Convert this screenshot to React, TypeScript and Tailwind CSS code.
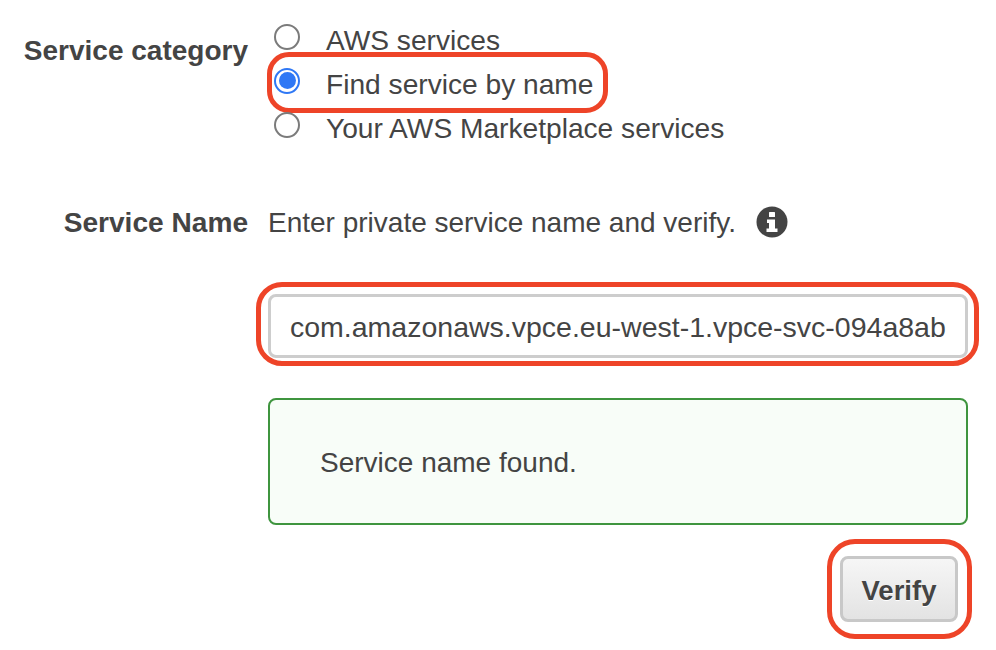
import React from 'react';

const FONT = "font-['Liberation_Sans',Arial,sans-serif]";

const Radio = ({ checked }: { checked?: boolean }) =>
  checked ? (
    <span className="mb-[7px] flex h-[26px] w-[26px] shrink-0 items-center justify-center rounded-full border-2 border-[#2f78f5] bg-white">
      <span className="h-[17px] w-[17px] rounded-full bg-[#2f78f5]" />
    </span>
  ) : (
    <span className="mb-[7px] h-[26px] w-[26px] shrink-0 rounded-full border-2 border-[#7b7b7b] bg-white" />
  );

const Highlight = ({ className }: { className: string }) => (
  <span className={`pointer-events-none absolute border-[5px] border-[#ee4428] ${className}`} />
);

const InfoIcon = () => (
  <svg width="32" height="32" viewBox="0 0 32 32" className="shrink-0">
    <circle cx="16" cy="16" r="15.5" fill="#444" />
    <rect x="13" y="6" width="6" height="5" rx="0.5" fill="#fff" />
    <path d="M11 13.5h8V22.5h2.5V26h-11V22.5H13V17h-2z" fill="#fff" />
  </svg>
);

const RadioRow = ({ label, checked, ring }: { label: string; checked?: boolean; ring?: boolean }) => (
  <div className="relative flex h-11 items-center gap-[26px] pl-1.5">
    <Radio checked={checked} />
    <span className="whitespace-nowrap pt-0.5 text-[28.15px] leading-none">{label}</span>
    {ring && <Highlight className="left-[-1px] top-[-10px] h-[61px] w-[341px] rounded-[22px]" />}
  </div>
);

const App = () => {
  return (
    <div className={`h-[650px] w-[996px] overflow-hidden bg-white text-[28px] text-[#444] ${FONT}`}>
      <div className="grid grid-cols-[248px_700px] gap-x-5 pt-[18px]">
        <div className="pt-3.5 text-right font-bold leading-[38px]">Service category</div>
        <div>
          <RadioRow label="AWS services" />
          <RadioRow label="Find service by name" checked ring />
          <RadioRow label="Your AWS Marketplace services" />
        </div>

        <div className="mt-[50px] flex h-[44px] items-center justify-end pt-0.5 text-[28.1px] font-bold">Service Name</div>
        <div className="mt-[50px] flex h-[44px] items-center gap-5">
          <span className="whitespace-nowrap pt-0.5">Enter private service name and verify.</span>
          <InfoIcon />
        </div>

        <div className="col-start-2 mt-[50px] flex flex-col">
          <div className="relative flex h-16 items-center rounded-lg border-[3px] border-[#cdcdcd] bg-white pl-[19px] pt-0.5 text-[28.5px]">
            <span className="whitespace-nowrap">com.amazonaws.vpce.eu-west-1.vpce-svc-094a8ab</span>
            <Highlight className="left-[-15px] top-[-15px] h-[84px] w-[723px] rounded-[26px]" />
          </div>

          <div className="mt-10 flex h-[127px] items-center rounded-lg border-2 border-[#3f953f] bg-[#f8fdf8] pl-[50px] pt-0.5">
            Service name found.
          </div>

          <div className="mt-[31px] flex justify-end pr-2.5">
            <button className="relative h-[66px] w-[118px] rounded-lg border-[3px] border-[#c8c8c8] bg-gradient-to-b from-[#f6f6f6] to-[#e3e3e3] pt-1 text-[27.5px] font-bold text-[#444] [text-shadow:0_1px_0_#fff]">
              Verify
              <Highlight className="left-[-16px] top-[-20px] h-[100px] w-[145px] rounded-[28px]" />
            </button>
          </div>
        </div>
      </div>
    </div>
  );
};

export default App;
